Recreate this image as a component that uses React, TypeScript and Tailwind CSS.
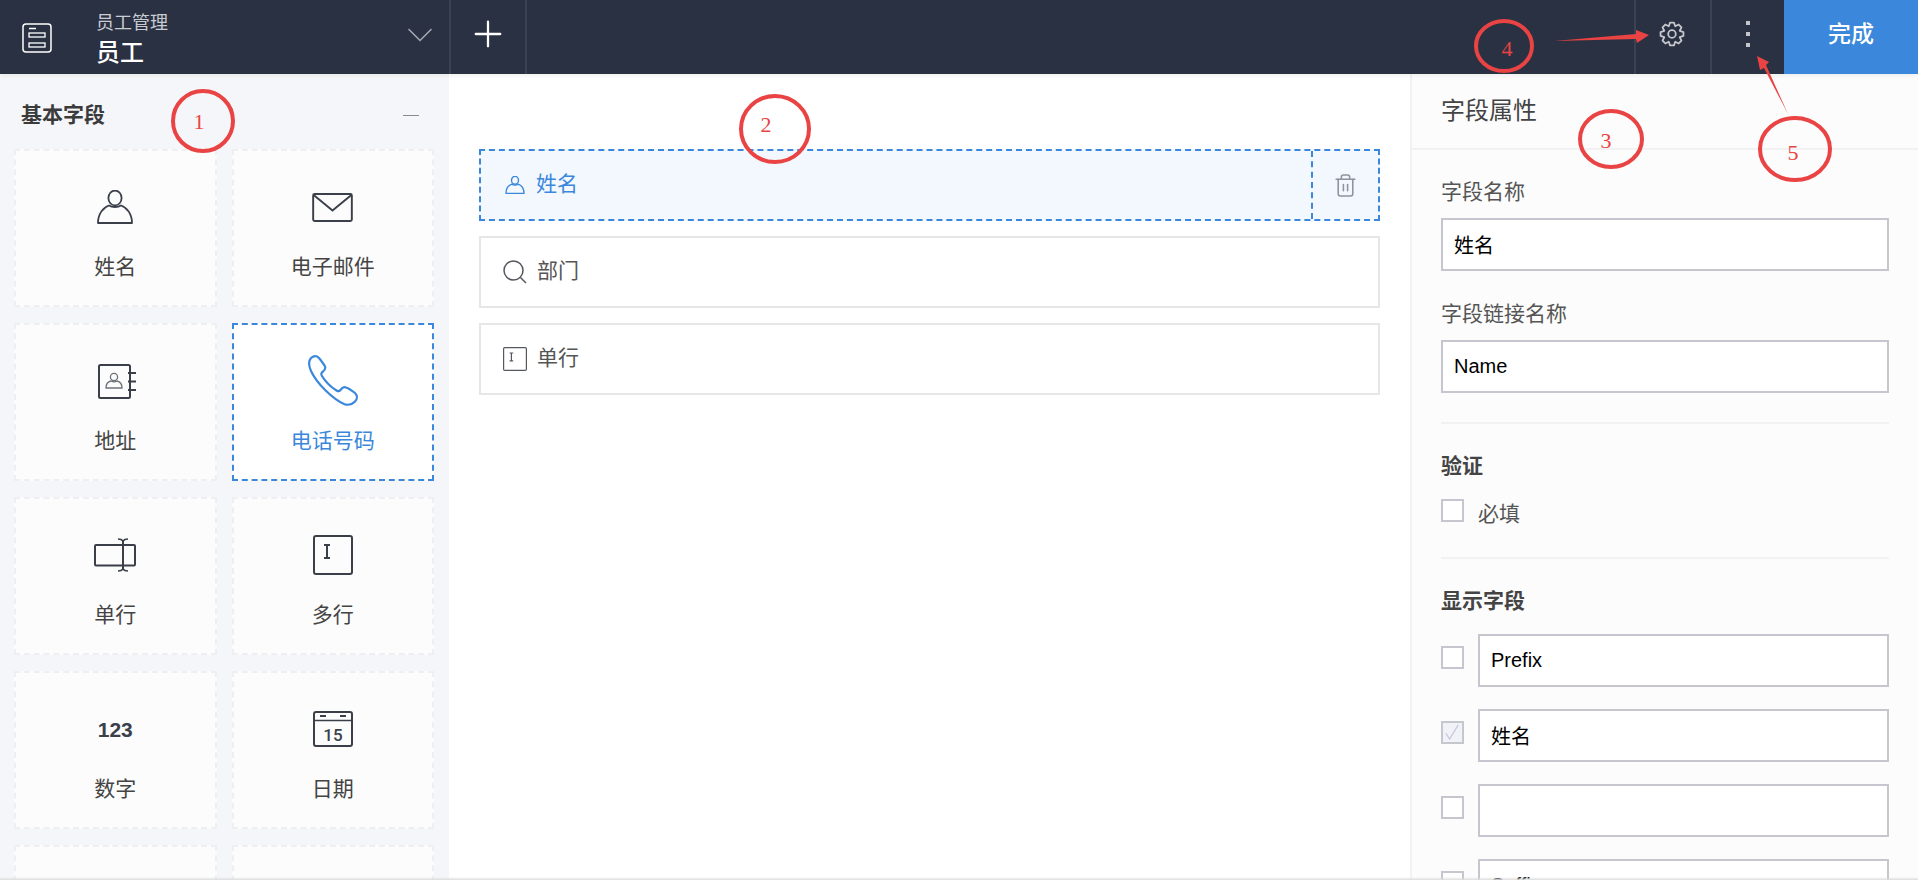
import type { ReactNode } from "react";
import { ChevronDown, Plus, Trash2 } from "lucide-react";

const FONT = "font-['Liberation_Sans','Noto_Sans_CJK_SC',sans-serif]";

function PersonIcon({ className, strokeWidth = 1.8 }: { className?: string; strokeWidth?: number }) {
  return (
    <svg viewBox="0 0 36 34" fill="none" stroke="currentColor" strokeWidth={strokeWidth} className={className}>
      <ellipse cx="18" cy="8" rx="6.6" ry="7.4" />
      <path d="M1 33C1 24 6 17.500 12 15.500 15 17.500 21 17.500 24 15.500 30 17.500 35 24 35 33z" strokeLinejoin="round" />
    </svg>
  );
}

function EnvelopeIcon() {
  return (
    <svg viewBox="0 0 42 30" fill="none" stroke="#3a3f4a" strokeWidth="2" className="h-[29px] w-[41px]">
      <rect x="1" y="1" width="40" height="28" rx="1.500" />
      <path d="M1.500 2 21 18 40.500 2" />
    </svg>
  );
}

function AddressIcon() {
  return (
    <svg viewBox="0 0 39 35" fill="none" className="ml-[4px] h-[35px] w-[39px]">
      <rect x="1" y="1" width="31" height="33" rx="1.500" stroke="#3a3f4a" strokeWidth="2" />
      <path d="M30 9h8M30 17.500h8M30 26h8" stroke="#3a3f4a" strokeWidth="1.800" />
      <circle cx="16" cy="13" r="3.600" stroke="#6d7179" strokeWidth="1.300" />
      <path d="M8 24c0-4 2.500-6.500 5-7 2 1.200 4 1.200 6 0 2.500.5 5 3 5 7z" stroke="#6d7179" strokeWidth="1.300" />
    </svg>
  );
}

function PhoneIcon() {
  return (
    <svg viewBox="0 0 52 52" fill="none" stroke="#3a87dc" strokeWidth="2.200" strokeLinejoin="round" className="ml-[2px] h-[52px] w-[52px]">
      <path d="M3 3c3-2.500 6-2 8 0 2 2.500 5 6.500 6 8.500 1 2.500-.5 4-2.500 5.500-1.500 1-1.500 2.500-.5 4 3 5 9 11 14.500 14.500 1.500 1 3 .8 4-.5 1.500-2 3-3.500 5.500-2.500 3 1 6.500 3.500 9 5.500 2.500 2.500 2.500 6 0 8.500-3 3-7 4-11 2.500C25 44 9 29 3 16 1 11.500 0 6.500 3 3z" />
    </svg>
  );
}

function SingleLineIcon() {
  return (
    <svg viewBox="0 0 42 34" fill="none" stroke="#3a3f4a" className="h-[34px] w-[42px]">
      <rect x="1" y="7" width="40" height="20.500" rx="1" strokeWidth="2" />
      <path d="M29 2v30" strokeWidth="2" />
      <path d="M24 1c2 0 4 .5 5 2 1-1.500 3-2 5-2M24 33c2 0 4-.5 5-2 1 1.500 3 2 5 2" strokeWidth="1.500" />
    </svg>
  );
}

function BoxCursorIcon({ className, stroke = "#3a3f4a" }: { className?: string; stroke?: string }) {
  return (
    <svg viewBox="0 0 40 40" fill="none" stroke={stroke} className={className}>
      <rect x="1" y="1" width="38" height="38" rx="2" strokeWidth="2" />
      <path d="M14 10v13M11 10h6M11 23h6" strokeWidth="2" />
    </svg>
  );
}

function CalendarIcon() {
  return (
    <svg viewBox="0 0 40 36" fill="none" stroke="#3a3f4a" className="h-[36px] w-[40px]">
      <rect x="1" y="1" width="38" height="34" rx="2" strokeWidth="2" />
      <path d="M1 9.500h38" strokeWidth="1.500" />
      <path d="M7 5h6M27 5h6" strokeWidth="2" />
      <text x="20" y="30" textAnchor="middle" fontSize="17" fontWeight="500" fill="#3a3f4a" stroke="none" fontFamily="Roboto, sans-serif">
        15
      </text>
    </svg>
  );
}

function SearchIcon() {
  return (
    <svg viewBox="0 0 24 24" fill="none" stroke="#55585f" strokeWidth="1.500" className="h-[24px] w-[24px]">
      <circle cx="10.500" cy="10.500" r="9.500" />
      <path d="M17.500 17.500 23 23" />
    </svg>
  );
}

function LogoIcon() {
  return (
    <svg viewBox="0 0 30 30" fill="none" stroke="#fff" className="h-[30px] w-[30px]">
      <rect x="1" y="1" width="28" height="28" rx="3" strokeWidth="1.500" />
      <path d="M7 5.500h7" strokeWidth="1.500" />
      <rect x="7" y="10" width="16" height="4" strokeWidth="1.300" />
      <rect x="7" y="20" width="16" height="4" strokeWidth="1.300" />
    </svg>
  );
}

// eight blunt teeth round a small hub
const GEAR_POINTS = Array.from({ length: 8 }, (_, i) => {
  const a = (i * Math.PI) / 4 - Math.PI / 2;
  const at = (r: number, d: number) => `${(13 + r * Math.cos(a + d)).toFixed(2)},${(13 + r * Math.sin(a + d)).toFixed(2)}`;
  return [at(8.4, -0.39), at(11.600, -0.17), at(11.600, 0.17), at(8.4, 0.39)].join(" ");
}).join(" ");

function GearIcon() {
  return (
    <svg viewBox="0 0 26 26" fill="none" stroke="#c5c7cc" strokeWidth="1.800" strokeLinejoin="round" className="h-[26px] w-[26px]">
      <polygon points={GEAR_POINTS} />
      <circle cx="13" cy="13" r="3.800" />
    </svg>
  );
}

type FieldCard = { label: string; icon: ReactNode; active?: boolean };

const FIELDS: FieldCard[] = [
  { label: "姓名", icon: <PersonIcon className="h-[34px] w-[36px] text-[#3a3f4a]" /> },
  { label: "电子邮件", icon: <EnvelopeIcon /> },
  { label: "地址", icon: <AddressIcon /> },
  { label: "电话号码", icon: <PhoneIcon />, active: true },
  { label: "单行", icon: <SingleLineIcon /> },
  { label: "多行", icon: <BoxCursorIcon className="h-[40px] w-[40px]" /> },
  { label: "数字", icon: <span className="text-[21px] leading-none font-bold text-[#3a3f4a]">123</span> },
  { label: "日期", icon: <CalendarIcon /> },
  { label: "", icon: null },
  { label: "", icon: null },
];

const DISPLAY_ROWS = [
  { value: "Prefix" },
  { value: "姓名", checked: true },
  { value: "" },
  { value: "Suffix" },
];

function Checkbox({ checked, className = "" }: { checked?: boolean; className?: string }) {
  return (
    <span
      className={
        checked
          ? `flex h-[23px] w-[23px] shrink-0 items-center justify-center border-2 border-[#c6c6ce] bg-[#f1f2f8] ${className}`
          : `block h-[23px] w-[23px] shrink-0 border-2 border-[#c6c6ce] bg-white ${className}`
      }
    >
      {checked ? (
        <svg viewBox="0 0 20 20" fill="none" stroke="#c3c8dc" strokeWidth="1.300" className="h-[19px] w-[19px]">
          <path d="M3 11l4 6 9-15" />
        </svg>
      ) : null}
    </span>
  );
}

function TextInput({ value }: { value: string }) {
  return (
    <input
      readOnly
      value={value}
      className="block h-[53px] w-full border-2 border-[#c6c6ce] bg-white px-[11px] text-[20px] text-black outline-none"
    />
  );
}

function Header() {
  return (
    <header className="relative z-10 flex h-[74px] shrink-0 items-stretch bg-[#2a3142] shadow-[0_2px_5px_rgba(0,0,0,0.06)]">
      <div className="flex w-[451px] items-center border-r-2 border-[#3a4254]">
        <div className="ml-[22px] mt-[2px]">
          <LogoIcon />
        </div>
        <div className="ml-[44px] flex flex-col pt-[4px]">
          <span className="text-[18px] leading-[24px] text-[#c9ccd3]">员工管理</span>
          <span className="mt-[4px] text-[24px] leading-[28px] font-medium text-white">员工</span>
        </div>
        <ChevronDown className="ml-auto mr-[7px] mb-[4px] h-[44px] w-[44px] text-[#a0a4ad]" strokeWidth={0.9} />
      </div>
      <div className="flex w-[76px] items-center justify-center border-r-2 border-[#3a4254]">
        <Plus className="mb-[7px] h-[42px] w-[42px] text-white" strokeWidth={1.300} />
      </div>
      <div className="flex-1" />
      <div className="flex w-[76px] items-center justify-center border-l-2 border-[#3a4254] pr-[3px]">
        <div className="mb-[6px]">
          <GearIcon />
        </div>
      </div>
      <div className="flex w-[74px] flex-col items-center justify-center gap-[7.500px] border-l-2 border-[#3a4254] pb-[6px]">
        <span className="h-[3.500px] w-[3.500px] bg-[#c4c6cc]" />
        <span className="h-[3.500px] w-[3.500px] bg-[#c4c6cc]" />
        <span className="h-[3.500px] w-[3.500px] bg-[#c4c6cc]" />
      </div>
      <button className="flex w-[134px] items-center justify-center bg-[#3a87dc] pb-[6px] text-[23px] font-medium text-white">完成</button>
    </header>
  );
}

function FieldPalette() {
  return (
    <aside className="w-[449px] shrink-0 overflow-hidden bg-[#f5f6fa] pl-[14px] pr-[15px] pt-[27px]">
      <div className="flex h-[28px] items-center justify-between pl-[7px] pr-[15px]">
        <span className="text-[21px] font-bold text-[#3b3b3b]">基本字段</span>
        <span className="h-px w-[16px] bg-[#8b8b8b]" />
      </div>
      <div className="mt-[20px] grid grid-cols-2 auto-rows-[158px] gap-x-[15px] gap-y-[16px]">
        {FIELDS.map((field, index) => (
          <div
            key={index}
            className={
              field.active
                ? "border-2 border-dashed border-[#3a87dc] bg-white"
                : "border-2 border-dashed border-[#efeff1] bg-[#fcfcfc]"
            }
          >
            <div className="flex h-full flex-col items-center">
              <div className="mt-[16px] flex h-[80px] items-center justify-center">{field.icon}</div>
              <span className={`mt-[6px] text-[21px] leading-[28px] ${field.active ? "text-[#3a87dc]" : "text-[#444]"}`}>
                {field.label}
              </span>
            </div>
          </div>
        ))}
      </div>
    </aside>
  );
}

function FormCanvas() {
  return (
    <main className="min-w-0 flex-1 bg-white px-[30px] pt-[75px]">
      <div className="flex h-[72px] border-2 border-dashed border-[#3a87dc] bg-[#f3f8fe]">
        <div className="flex flex-1 items-center gap-[11px] pl-[24px]">
          <PersonIcon className="h-[18px] w-[20px] text-[#3a87dc]" strokeWidth={2.6} />
          <span className="mt-[-2px] text-[21px] text-[#3a87dc]">姓名</span>
        </div>
        <div className="flex w-[67px] items-center justify-center border-l-2 border-dashed border-[#3a87dc]">
          <Trash2 className="h-[25px] w-[25px] text-[#8f939c]" strokeWidth={1.500} />
        </div>
      </div>
      <div className="mt-[15px] flex h-[72px] items-center gap-[10px] border-2 border-[#e6e6e6] pl-[22px]">
        <SearchIcon />
        <span className="mt-[-2px] text-[21px] text-[#555]">部门</span>
      </div>
      <div className="mt-[15px] flex h-[72px] items-center gap-[10px] border-2 border-[#e6e6e6] pl-[22px]">
        <BoxCursorIcon className="h-[24px] w-[24px]" stroke="#55585f" />
        <span className="mt-[-2px] text-[21px] text-[#555]">单行</span>
      </div>
    </main>
  );
}

function PropertiesPanel() {
  return (
    <aside className="w-[508px] shrink-0 overflow-hidden border-l-2 border-[#f2f2f5] bg-[#fcfcfc]">
      <div className="flex h-[76px] items-center border-b-2 border-[#f2f2f5] pl-[29px] text-[24px] text-[#444]">
        <span className="mt-[-1px]">字段属性</span>
      </div>
      <div className="px-[29px] pt-[28px]">
        <div className="text-[21px] leading-[28px] text-[#555]">字段名称</div>
        <div className="mt-[12px]">
          <TextInput value="姓名" />
        </div>
        <div className="mt-[29px] text-[21px] leading-[28px] text-[#555]">字段链接名称</div>
        <div className="mt-[12px]">
          <TextInput value="Name" />
        </div>
        <div className="mt-[29px] h-[2px] bg-[#f2f2f2]" />
        <div className="mt-[27px] text-[21px] leading-[30px] font-bold text-[#444]">验证</div>
        <div className="mt-[18px] flex items-start gap-[14px]">
          <Checkbox />
          <span className="pt-[1px] text-[21px] leading-[28px] text-[#555]">必填</span>
        </div>
        <div className="mt-[29px] h-[2px] bg-[#f2f2f2]" />
        <div className="mt-[27px] text-[21px] leading-[30px] font-bold text-[#444]">显示字段</div>
        <div className="mt-[18px] flex flex-col gap-[22px]">
          {DISPLAY_ROWS.map((row, index) => (
            <div key={index} className="flex items-start gap-[14px]">
              <Checkbox checked={row.checked} className="mt-[12px]" />
              <TextInput value={row.value} />
            </div>
          ))}
        </div>
      </div>
    </aside>
  );
}

function Annotations() {
  const circles = [
    { cx: 203, cy: 121, rx: 30, ry: 30, x: 199, y: 129, n: "1" },
    { cx: 775, cy: 129, rx: 34, ry: 33, x: 766, y: 132, n: "2" },
    { cx: 1611, cy: 139, rx: 31, ry: 28, x: 1606, y: 148, n: "3" },
    { cx: 1504, cy: 46, rx: 28, ry: 25, x: 1507, y: 56, n: "4" },
    { cx: 1795, cy: 149, rx: 35, ry: 31, x: 1793, y: 160, n: "5" },
  ];
  return (
    <svg className="pointer-events-none absolute inset-0 z-20 h-full w-full">
      {circles.map((c) => (
        <g key={c.n}>
          <ellipse cx={c.cx} cy={c.cy} rx={c.rx} ry={c.ry} fill="none" stroke="#e94343" strokeWidth="4" />
          <text x={c.x} y={c.y} textAnchor="middle" fontSize="22" fill="#e94343" fontFamily="'Liberation Serif', serif">
            {c.n}
          </text>
        </g>
      ))}
      <polygon points="1554,41 1636,34 1636,30 1649,35 1637,43 1636,39" fill="#e94343" />
      <polygon points="1788,114 1764,68 1760,70 1757,56 1769,62 1766,65" fill="#e94343" />
    </svg>
  );
}

export default function App() {
  return (
    <div className={`relative flex h-screen w-full flex-col overflow-hidden bg-white ${FONT}`}>
      <Header />
      <div className="flex min-h-0 flex-1">
        <FieldPalette />
        <FormCanvas />
        <PropertiesPanel />
      </div>
      <div className="absolute inset-x-0 bottom-0 z-10 h-[3px] bg-gradient-to-b from-transparent to-[#dcdcdc]" />
      <Annotations />
    </div>
  );
}
